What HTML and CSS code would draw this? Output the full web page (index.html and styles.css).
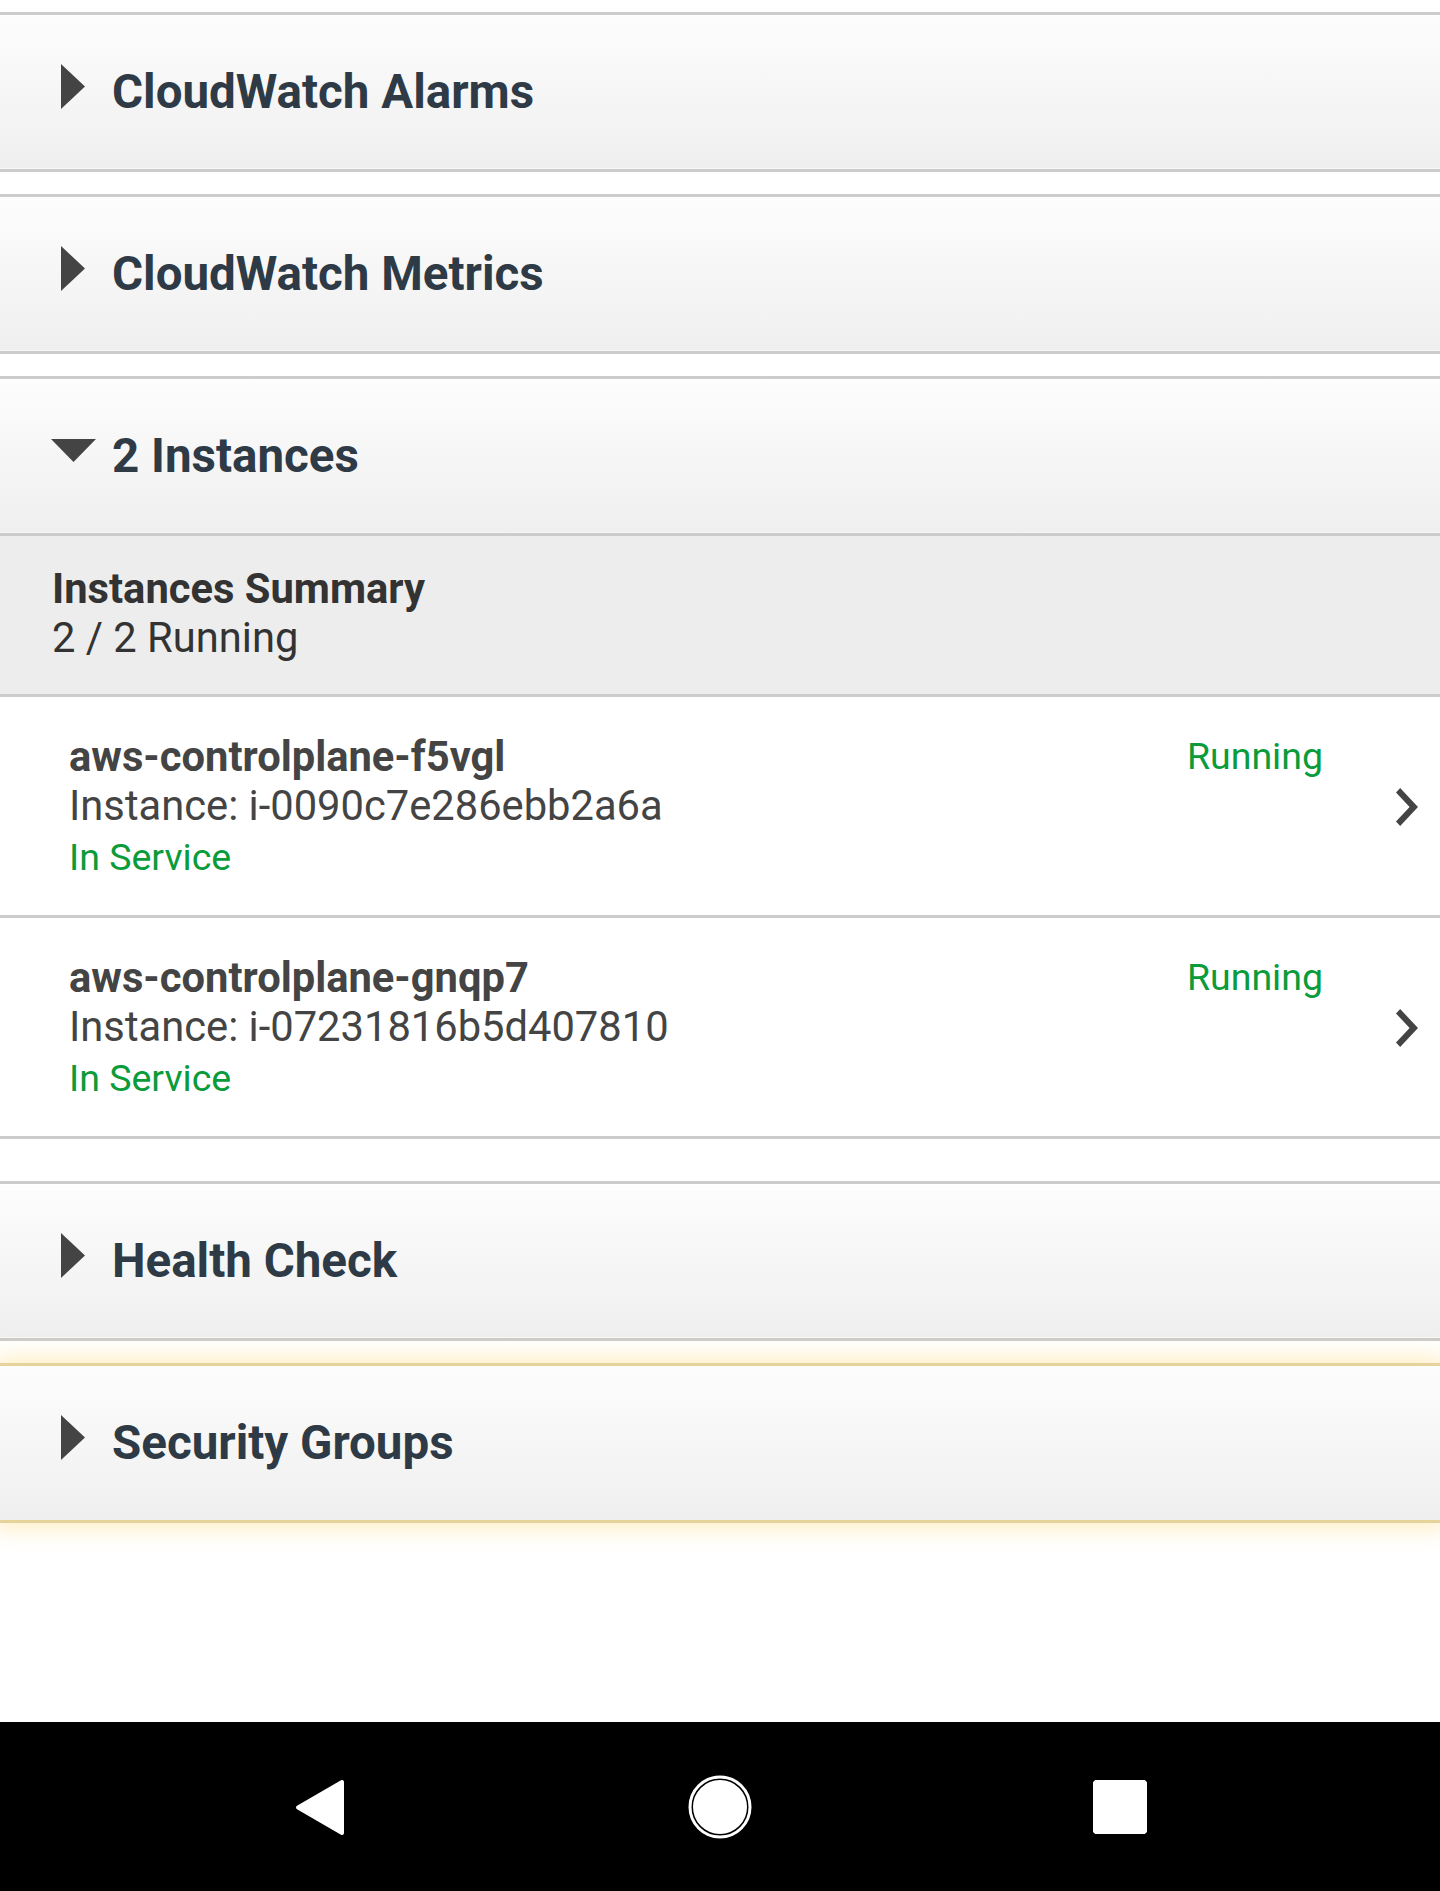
FILE: index.html
```html
<!DOCTYPE html>
<html lang="en">
<head>
    <meta charset="UTF-8">
    <title>Load Balancer</title>
    <link rel="stylesheet" href="styles.css">
</head>
<body>
    <div class="screen">
        <main class="panels">
            <!-- CloudWatch Alarms -->
            <section class="panel">
                <div class="panel-head">
                    <span class="caret">
                        <svg width="24" height="45" viewBox="0 0 24 45"><polygon points="0,0 24,22.5 0,45" /></svg>
                    </span>
                    <h2>CloudWatch Alarms</h2>
                </div>
            </section>

            <!-- CloudWatch Metrics -->
            <section class="panel">
                <div class="panel-head">
                    <span class="caret">
                        <svg width="24" height="45" viewBox="0 0 24 45"><polygon points="0,0 24,22.5 0,45" /></svg>
                    </span>
                    <h2>CloudWatch Metrics</h2>
                </div>
            </section>

            <!-- Instances -->
            <section class="panel panel-open">
                <div class="panel-head">
                    <span class="caret">
                        <svg width="45" height="23" viewBox="0 0 45 23"><polygon points="0,0 45,0 22.5,23" /></svg>
                    </span>
                    <h2>2 Instances</h2>
                </div>

                <div class="summary">
                    <div class="summary-title">Instances Summary</div>
                    <div>2 / 2 Running</div>
                </div>

                <div class="instance">
                    <div class="instance-info">
                        <div class="instance-name">aws-controlplane-f5vgl</div>
                        <div>Instance: i-0090c7e286ebb2a6a</div>
                        <div class="ok">In Service</div>
                    </div>
                    <div class="instance-state ok">Running</div>
                    <svg class="chevron" width="22" height="38" viewBox="8.59 6 7.41 12" preserveAspectRatio="none"><path d="M10 6L8.59 7.41 13.17 12l-4.58 4.59L10 18l6-6z" /></svg>
                </div>

                <div class="instance">
                    <div class="instance-info">
                        <div class="instance-name">aws-controlplane-gnqp7</div>
                        <div>Instance: i-07231816b5d407810</div>
                        <div class="ok">In Service</div>
                    </div>
                    <div class="instance-state ok">Running</div>
                    <svg class="chevron" width="22" height="38" viewBox="8.59 6 7.41 12" preserveAspectRatio="none"><path d="M10 6L8.59 7.41 13.17 12l-4.58 4.59L10 18l6-6z" /></svg>
                </div>
            </section>

            <!-- Health Check -->
            <section class="panel">
                <div class="panel-head">
                    <span class="caret">
                        <svg width="24" height="45" viewBox="0 0 24 45"><polygon points="0,0 24,22.5 0,45" /></svg>
                    </span>
                    <h2>Health Check</h2>
                </div>
            </section>

            <!-- Security Groups (focused) -->
            <section class="panel panel-focus">
                <div class="panel-head">
                    <span class="caret">
                        <svg width="24" height="45" viewBox="0 0 24 45"><polygon points="0,0 24,22.5 0,45" /></svg>
                    </span>
                    <h2>Security Groups</h2>
                </div>
            </section>
        </main>

        <nav class="navbar">
            <span class="nav-btn">
                <svg width="56" height="60" viewBox="0 0 56 60"><polygon points="50,5 50,56 6,30.5" /></svg>
            </span>
            <span class="nav-btn">
                <svg width="66" height="66" viewBox="0 0 66 66">
                    <circle cx="33" cy="33" r="30" class="ring" />
                    <circle cx="33" cy="33" r="25" />
                </svg>
            </span>
            <span class="nav-btn">
                <svg width="54" height="54" viewBox="0 0 54 54"><rect x="1" y="1" width="52" height="52" rx="5" /></svg>
            </span>
        </nav>
    </div>
</body>
</html>
```

FILE: styles.css
```css
* {
    margin: 0;
    padding: 0;
    box-sizing: border-box;
}

body {
    font-family: Roboto, "Noto Sans", sans-serif;
    background: #fff;
    color: #444;
}

.screen {
    display: flex;
    flex-direction: column;
    min-height: 1891px;
}

.panels {
    flex: 1;
    padding-top: 12px;
}

.panel {
    margin-bottom: 22px;
}

.panel-open {
    margin-bottom: 42px;
}

.panel-head {
    display: flex;
    align-items: center;
    height: 160px;
    padding-left: 48px;
    background: linear-gradient(#fdfdfd, #efefef);
    border-top: 3px solid #cccccc;
    border-bottom: 3px solid #cccccc;
    box-shadow: inset 0 1px 0 #fff, inset 0 -1px 0 #f8f8f8;
}

.caret {
    display: flex;
    justify-content: center;
    width: 50px;
    margin-right: 14px;
    margin-bottom: 12px;
}

.caret svg {
    fill: #444;
}

.panel-head h2 {
    font-size: 47.5px;
    font-weight: 700;
    color: #2e3b46;
}

.panel-focus .panel-head {
    position: relative;
    border-color: #e6d29b;
    box-shadow: 0 0 22px 5px rgba(255, 210, 95, 0.4);
}

.summary {
    padding: 28px 52px 32px;
    background: #ededed;
    border-bottom: 3px solid #cccccc;
    font-size: 41.7px;
    line-height: 49px;
    color: #333;
}

.summary-title {
    font-weight: 700;
}

.instance {
    display: flex;
    align-items: center;
    padding: 35px 22px 33px 69px;
    border-bottom: 3px solid #cccccc;
    font-size: 41.7px;
    line-height: 49px;
}

.instance-info {
    flex: 1;
}

.instance-name {
    font-weight: 700;
}

.instance-info .ok {
    padding-top: 3px;
}

.instance-state {
    align-self: flex-start;
    margin-right: 73px;
}

.ok {
    font-size: 37.5px;
    color: #0a9b3b;
}

.chevron {
    fill: #444;
}

.navbar {
    display: flex;
    justify-content: center;
    align-items: center;
    gap: 300px;
    height: 169px;
    background: #000;
}

.nav-btn {
    display: flex;
    justify-content: center;
    width: 100px;
}

.nav-btn svg {
    fill: #fff;
    stroke: #fff;
    stroke-width: 4;
    stroke-linejoin: round;
}

.nav-btn .ring {
    fill: none;
    stroke-width: 3;
}
```
